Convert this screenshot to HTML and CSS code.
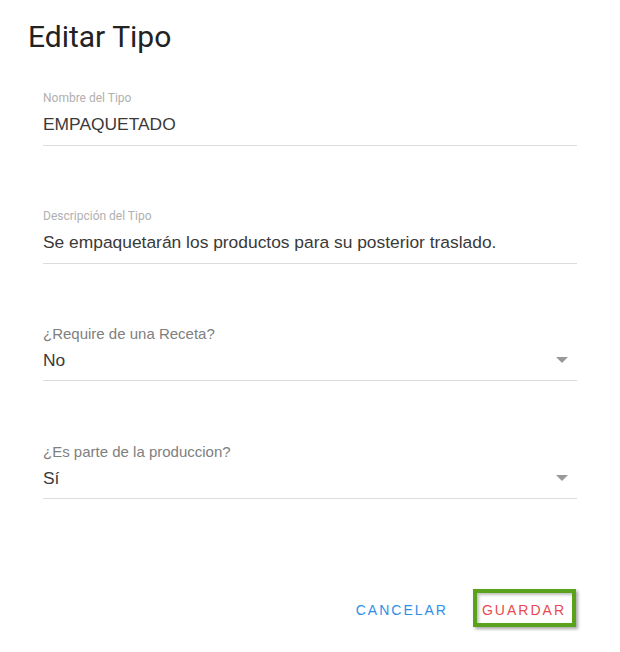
FILE: index.html
```html
<!DOCTYPE html>
<html lang="es">
<head>
<meta charset="utf-8">
<title>Editar Tipo</title>
<link rel="stylesheet" href="styles.css">
</head>
<body>
<div class="dialog">
  <h1 class="title">Editar Tipo</h1>
  <div class="fields">
    <div class="field">
      <div class="label">Nombre del Tipo</div>
      <div class="value">EMPAQUETADO</div>
    </div>
    <div class="field">
      <div class="label">Descripción del Tipo</div>
      <div class="value">Se empaquetarán los productos para su posterior traslado.</div>
    </div>
    <div class="field select">
      <div class="label">¿Require de una Receta?</div>
      <div class="value-row">
        <span class="value">No</span>
        <svg class="arrow" width="12" height="6" viewBox="0 0 12 6"><path d="M0 0h12L6 6z" fill="#999"/></svg>
      </div>
    </div>
    <div class="field select last">
      <div class="label">¿Es parte de la produccion?</div>
      <div class="value-row">
        <span class="value">Sí</span>
        <svg class="arrow" width="12" height="6" viewBox="0 0 12 6"><path d="M0 0h12L6 6z" fill="#999"/></svg>
      </div>
    </div>
  </div>
  <div class="actions">
    <button class="btn cancel">CANCELAR</button>
    <button class="btn save">GUARDAR</button>
  </div>
</div>
</body>
</html>
```

FILE: styles.css
```css
html, body {
  margin: 0;
  padding: 0;
  background: #fff;
}
body {
  font-family: "Liberation Sans", Arial, sans-serif;
  width: 620px;
  height: 652px;
  overflow: hidden;
}
.dialog {
  display: flex;
  flex-direction: column;
}
.title {
  margin: 0;
  padding: 20px 0 0 28px;
  font-family: Roboto, sans-serif;
  font-weight: 400;
  font-size: 30px;
  line-height: 34px;
  color: #222;
}
.fields {
  display: flex;
  flex-direction: column;
  padding: 36px 43px 0 43px;
}
.field {
  display: flex;
  flex-direction: column;
  border-bottom: 1px solid #dcdcdc;
  padding-bottom: 9px;
}
.field + .field {
  margin-top: 62px;
}
.field + .field.select {
  margin-top: 61px;
}
.field.select.last {
  margin-top: 62px;
}
.label {
  font-family: Roboto, sans-serif;
  font-size: 12px;
  line-height: 16px;
  color: #b0b0b0;
}
.value {
  margin-top: 6px;
  font-size: 17.4px;
  line-height: 24px;
  color: #3a3a3a;
}
.field.select {
  padding-bottom: 10px;
}
.field.select .label {
  font-family: "Liberation Sans", Arial, sans-serif;
  font-size: 15px;
  line-height: 17px;
  color: #808080;
}
.value-row {
  display: flex;
  justify-content: space-between;
  align-items: flex-start;
}
.value-row .value {
  margin-top: 8px;
  line-height: 20px;
}
.arrow {
  margin: 15px 9px 0 0;
}
.actions {
  display: flex;
  justify-content: flex-end;
  align-items: center;
  gap: 25px;
  padding: 90px 44px 0 0;
}
.btn {
  font-family: "Liberation Sans", Arial, sans-serif;
  font-size: 14px;
  letter-spacing: 2px;
  background: #fff;
  border: none;
  margin: 0;
  cursor: pointer;
}
.cancel {
  color: #2f8fe6;
  padding: 4px 0 0 0;
  line-height: 27px;
}
.save {
  color: #e84a4f;
  border: 4px solid #5aa21c;
  padding: 4px 6px 0 5px;
  line-height: 26px;
  box-shadow: 2px 2px 3px rgba(0, 0, 0, 0.35), inset 2px 2px 3px rgba(0, 0, 0, 0.25);
}
```
